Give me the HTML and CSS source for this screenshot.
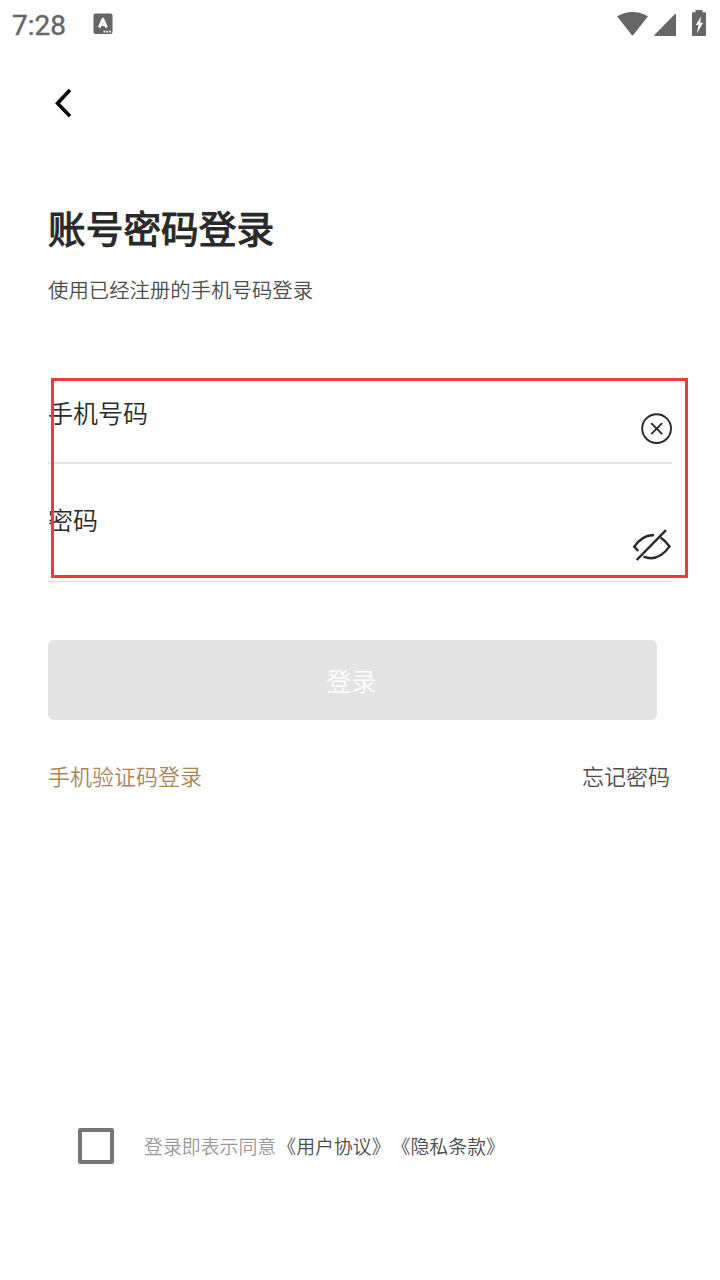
FILE: index.html
```html
<!DOCTYPE html>
<html lang="zh-CN">

<head>
  <meta charset="UTF-8" />
  <meta name="viewport" content="width=device-width, initial-scale=1.0" />
  <title>账号密码登录</title>
  <link rel="stylesheet" href="styles.css">
</head>

<body>
  <div class="status-bar">
    <span class="time">7:28</span>
    <svg class="input-icon" width="20" height="22" viewBox="0 0 20 22">
      <rect x="0.5" y="0.5" width="19" height="20.5" rx="2" fill="#666" />
      <path d="M6.2 14.5 L9.9 6 L13.6 14.5 M7.5 11.8 H12.3" fill="none" stroke="#fff" stroke-width="2.6" stroke-linejoin="round" />
      <path d="M10.5 18.7 H18" stroke="#fff" stroke-width="1.7" stroke-dasharray="1.8 1.1" />
    </svg>
    <div class="status-icons">
      <svg width="32" height="26" viewBox="0 0 32 26">
        <path d="M0 6.3 Q15.5 -2.5 31 6.3 L16.5 24.8 Q15.5 26 14.5 24.8 Z" fill="#666" />
      </svg>
      <svg width="22" height="26" viewBox="0 0 22 26">
        <path d="M21 2 Q22 1.5 22 3 V24 H1 Q-0.4 24 0.6 22.8 Z" fill="#666" />
      </svg>
      <svg width="14" height="26" viewBox="0 0 14 26">
        <path d="M3.5 0 H10.5 V2.3 H13 Q14 2.3 14 3.3 V25 Q14 26 13 26 H1 Q0 26 0 25 V3.3 Q0 2.3 1 2.3 H3.5 Z" fill="#666" />
        <path d="M9 6.5 L3.8 15 H6.5 L5 23.4 L11 12.7 H8.2 Z" fill="#fff" />
      </svg>
    </div>
  </div>

  <div class="nav">
    <svg width="18" height="30" viewBox="0 0 18 30">
      <path d="M16 2 L3.5 15.3 L16 28.3" fill="none" stroke="#000" stroke-width="3.5" />
    </svg>
  </div>

  <div class="container">
    <h1 class="title">账号密码登录</h1>
    <p class="subtitle">使用已经注册的手机号码登录</p>

    <div class="form">
      <div class="field">
        <label>手机号码</label>
        <svg class="clear-icon" width="32" height="32" viewBox="0 0 32 32" fill="none" stroke="#292929" stroke-width="1.9">
          <circle cx="16.6" cy="15.6" r="14.4" />
          <path d="M11.2 10.2 L22.2 21.2 M22.2 10.2 L11.2 21.2" />
        </svg>
      </div>
      <div class="field password">
        <label>密码</label>
        <svg class="eye-icon" width="40" height="32" viewBox="0 0 40 32" fill="none" stroke="#292929" stroke-width="2.4">
          <path d="M22 6.3 Q11.5 5 2.2 17.6 L6.3 22" />
          <path d="M28.5 8.5 Q33 11.5 37.6 17.4 Q26 33.5 11.5 27.6" />
          <path d="M4.7 31 L34 1.2" />
        </svg>
      </div>
      <div class="highlight"></div>
    </div>

    <button class="login-btn">登录</button>

    <div class="links">
      <a class="code-login">手机验证码登录</a>
      <a class="forgot">忘记密码</a>
    </div>
  </div>

  <div class="agreement">
    <span class="checkbox"></span>
    <div class="agreement-text">登录即表示同意<span class="doc">《用户协议》</span><span class="doc">《隐私条款》</span></div>
  </div>
</body>

</html>
```
FILE: styles.css
```css
body {
  margin: 0;
  height: 1280px;
  background: #fff;
  font-family: "Noto Sans CJK SC", sans-serif;
  font-weight: 350;
  color: #292929;
  overflow: hidden;
}

svg {
  display: block;
}

.status-bar {
  display: flex;
  align-items: flex-start;
  height: 48px;
  box-sizing: border-box;
  padding: 10px 14px 0 12px;
}

.time {
  width: 81px;
  font-family: Roboto, sans-serif;
  font-size: 28px;
  font-weight: 400;
  line-height: 31px;
  color: #666;
  -webkit-text-stroke: 0.4px #666;
}

.input-icon {
  margin-top: 3px;
}

.status-icons {
  display: flex;
  margin-left: auto;
}

.status-icons svg + svg {
  margin-left: 5px;
}

.status-icons svg:nth-child(2) {
  margin-top: 2px;
}

.status-icons svg:last-child {
  margin-left: 16px;
}

.nav {
  padding: 40px 54px 0;
  height: 72px;
}

.container {
  padding: 0 48px;
}

.title {
  margin: 39px 0 0;
  font-size: 37.7px;
  line-height: 56px;
  font-weight: 400;
  -webkit-text-stroke: 1.1px #292929;
}

.subtitle {
  margin: 19px 0 0;
  font-size: 20.4px;
  line-height: 30px;
  color: #4d4d4d;
}

.form {
  position: relative;
  margin-top: 76px;
}

.field {
  display: flex;
  justify-content: space-between;
  align-items: flex-start;
  height: 84px;
  box-sizing: border-box;
  padding-top: 14px;
  border-bottom: 2px solid #e4e4e4;
}

.field label {
  font-size: 25px;
  line-height: 36px;
}

.clear-icon {
  margin-top: 19px;
}

.password {
  height: 118px;
  padding-top: 37px;
  border-bottom: 1px solid #dcdcdc;
}

.eye-icon {
  margin-top: 28px;
}

/* red frame over both fields */
.highlight {
  position: absolute;
  top: -2px;
  left: 3px;
  right: -16px;
  height: 194px;
  border: 3px solid #e93c3f;
}

.login-btn {
  display: block;
  width: 609px;
  height: 80px;
  margin-top: 57.5px;
  padding: 0 2px 0 0;
  border: none;
  border-radius: 6px;
  background: #e4e4e4;
  color: #fff;
  font-family: inherit;
  font-size: 25px;
  font-weight: inherit;
}

.links {
  display: flex;
  justify-content: space-between;
  padding-right: 2px;
  margin-top: 39.5px;
  font-size: 22px;
  line-height: 32px;
}

.code-login {
  color: #ab855a;
}

.forgot {
  color: #4d4d4d;
}

.agreement {
  display: flex;
  align-items: center;
  margin-top: 337px;
  padding-left: 78px;
}

.checkbox {
  width: 36px;
  height: 36px;
  box-sizing: border-box;
  border: 4px solid #777;
  border-radius: 2px;
}

.agreement-text {
  margin-left: 30px;
  font-size: 18.9px;
  line-height: 28px;
  color: #999;
  white-space: nowrap;
  text-spacing-trim: space-all;
}

.doc {
  margin-left: 1px;
  color: #4d4d4d;
}
```
